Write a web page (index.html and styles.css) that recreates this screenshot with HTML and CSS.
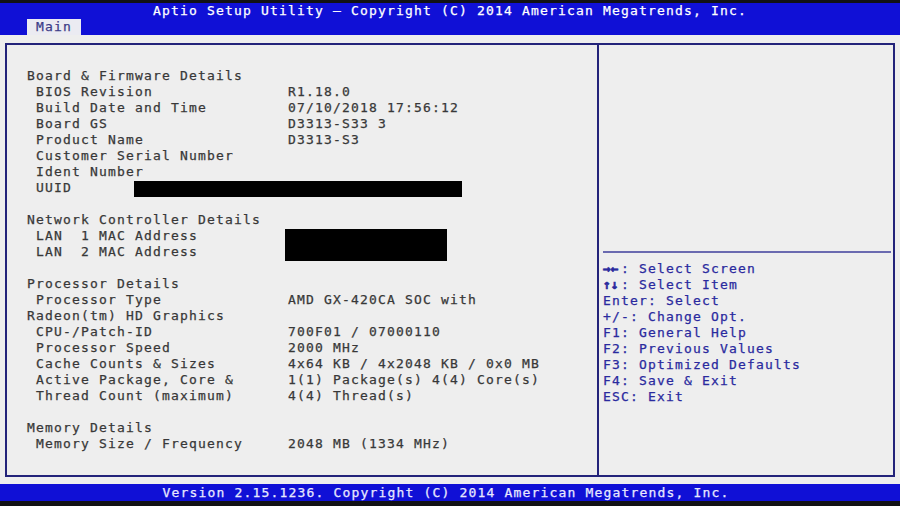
FILE: index.html
```html
<!DOCTYPE html>
<html>
<head>
<meta charset="utf-8">
<link rel="stylesheet" href="styles.css">
</head>
<body>
<div class="screen">
  <div class="edge-top"></div>
  <header class="header">
    <div class="title">Aptio Setup Utility – Copyright (C) 2014 American Megatrends, Inc.</div>
    <div class="tabs"><span class="tab">Main</span></div>
  </header>
  <main class="body">
    <section class="left">
      <div class="rows">
        <div class="head">Board &amp; Firmware Details</div>
        <div class="lab"> BIOS Revision</div><div class="val">R1.18.0</div>
        <div class="lab"> Build Date and Time</div><div class="val">07/10/2018 17:56:12</div>
        <div class="lab"> Board GS</div><div class="val">D3313-S33 3</div>
        <div class="lab"> Product Name</div><div class="val">D3313-S3</div>
        <div class="lab"> Customer Serial Number</div><div class="val"></div>
        <div class="lab"> Ident Number</div><div class="val"></div>
        <div class="full uuid"><span class="uuid-lab"> UUID</span><span class="redact redact-uuid"></span></div>
        <div class="blank"></div>
        <div class="head">Network Controller Details</div>
        <div class="lab"> LAN  1 MAC Address</div><div class="val span2"><span class="redact redact-mac"></span></div>
        <div class="lab"> LAN  2 MAC Address</div>
        <div class="blank"></div>
        <div class="head">Processor Details</div>
        <div class="lab"> Processor Type</div><div class="val">AMD GX-420CA SOC with</div>
        <div class="head">Radeon(tm) HD Graphics</div>
        <div class="lab"> CPU-/Patch-ID</div><div class="val">700F01 / 07000110</div>
        <div class="lab"> Processor Speed</div><div class="val">2000 MHz</div>
        <div class="lab"> Cache Counts &amp; Sizes</div><div class="val">4x64 KB / 4x2048 KB / 0x0 MB</div>
        <div class="lab"> Active Package, Core &amp;</div><div class="val">1(1) Package(s) 4(4) Core(s)</div>
        <div class="lab"> Thread Count (maximum)</div><div class="val">4(4) Thread(s)</div>
        <div class="blank"></div>
        <div class="head">Memory Details</div>
        <div class="lab"> Memory Size / Frequency</div><div class="val">2048 MB (1334 MHz)</div>
      </div>
    </section>
    <aside class="right">
      <div class="desc"></div>
      <div class="divider"></div>
      <ul class="help">
        <li><span class="arrows">→←</span>: Select Screen</li>
        <li><span class="arrows">↑↓</span>: Select Item</li>
        <li>Enter: Select</li>
        <li>+/-: Change Opt.</li>
        <li>F1: General Help</li>
        <li>F2: Previous Values</li>
        <li>F3: Optimized Defaults</li>
        <li>F4: Save &amp; Exit</li>
        <li>ESC: Exit</li>
      </ul>
    </aside>
  </main>
  <footer class="footer">Version 2.15.1236. Copyright (C) 2014 American Megatrends, Inc.</footer>
  <div class="edge-bottom"></div>
</div>
</body>
</html>
```
FILE: styles.css
```css
html, body {
  margin: 0;
  padding: 0;
  background: #eeeeee;
}
.screen {
  width: 900px;
  height: 506px;
  display: flex;
  flex-direction: column;
  background: #eeeeee;
  font-family: "DejaVu Sans Mono", "Liberation Mono", monospace;
  font-size: 13px;
  letter-spacing: 1.17px;
  line-height: 16px;
  overflow: hidden;
  -webkit-text-stroke: 0.25px;
}
.title, .tab, .head, .lab, .val, .uuid-lab, .help li, .footer {
  white-space: pre;
}
.edge-top {
  height: 3px;
  background: #111114;
}
.header {
  height: 32px;
  background: #1010d6;
  display: flex;
  flex-direction: column;
}
.title {
  height: 16px;
  text-align: center;
  color: #ffffff;
}
.tabs {
  height: 16px;
  display: flex;
  padding-left: 27px;
}
.tab {
  background: #ebebf2;
  color: #3c3c88;
  padding: 0 9px;
}
.body {
  margin: 8px 5px 7px 5px;
  height: 434px;
  display: flex;
}
.left {
  width: 592px;
  border: 2px solid #23237a;
  border-right: none;
  padding: 23px 0 0 20px;
  box-sizing: border-box;
  color: #383838;
}
.rows {
  display: grid;
  grid-template-columns: 261px 1fr;
  grid-auto-rows: 16px;
}
.head, .full, .blank {
  grid-column: 1 / 3;
}
.span2 {
  grid-row: span 2;
}
.uuid {
  display: flex;
}
.uuid-lab {
  width: 107px;
}
.redact {
  display: block;
  background: #000000;
}
.redact-uuid {
  width: 328px;
  height: 16px;
  margin-top: 1px;
}
.redact-mac {
  width: 162px;
  height: 32px;
  margin-left: -3px;
  margin-top: 1px;
}
.right {
  flex: 1;
  border: 2px solid #23237a;
  display: flex;
  flex-direction: column;
  padding: 0 2px 0 4px;
}
.desc {
  height: 206px;
}
.divider {
  height: 2px;
  background: #6a6ab0;
}
.help {
  list-style: none;
  margin: 8px 0 0 0;
  padding: 0;
  color: #2a2a9e;
}
.arrows {
  display: inline-block;
  width: 18px;
  font-weight: bold;
  letter-spacing: 0;
  -webkit-text-stroke: 0.6px;
}
.footer {
  height: 17px;
  background: #1010d6;
  color: #e8e8ff;
  text-align: center;
  line-height: 17px;
  padding-right: 8px;
}
.edge-bottom {
  flex: 1;
  background: #111114;
}
```
